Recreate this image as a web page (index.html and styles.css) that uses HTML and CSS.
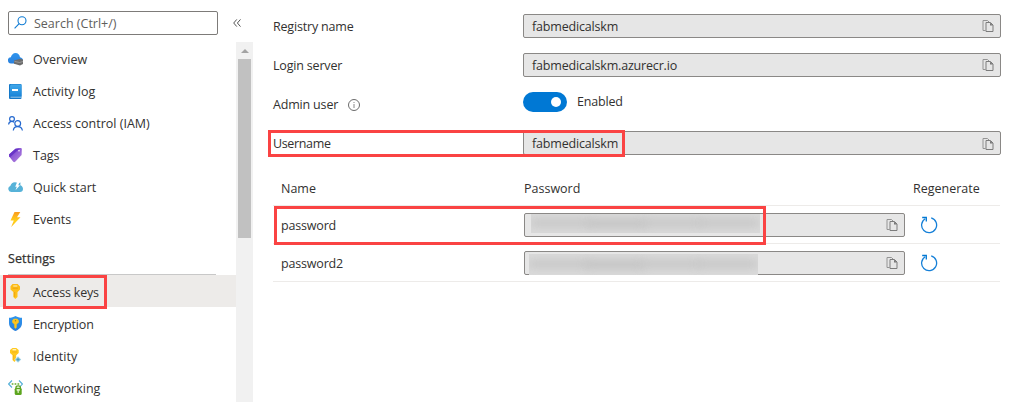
FILE: index.html
```html
<!DOCTYPE html>
<html lang="en">
<head>
<meta charset="utf-8">
<title>Access keys</title>
<link rel="stylesheet" href="styles.css">
</head>
<body>
<svg class="defs" width="0" height="0" aria-hidden="true">
  <defs>
    <linearGradient id="blue" x1="0" y1="0" x2="0" y2="1"><stop offset="0" stop-color="#2f95ee"/><stop offset="1" stop-color="#2a80dc"/></linearGradient>
    <linearGradient id="book" x1="0" y1="0" x2="0" y2="1"><stop offset="0" stop-color="#42a8ea"/><stop offset="1" stop-color="#1784d8"/></linearGradient>
    <linearGradient id="violet" x1="0" y1="0" x2="1" y2="1"><stop offset="0" stop-color="#6f35cf"/><stop offset="1" stop-color="#b78ade"/></linearGradient>
    <linearGradient id="bolt" x1="0" y1="0" x2="0" y2="1"><stop offset="0" stop-color="#fa9b1e"/><stop offset=".6" stop-color="#ffd21c"/><stop offset="1" stop-color="#fcb514"/></linearGradient>
    <linearGradient id="gold" x1="0" y1="0" x2="0" y2="1"><stop offset="0" stop-color="#fdb913"/><stop offset="1" stop-color="#ffc71c"/></linearGradient>
    <symbol id="copy" viewBox="0 0 12 13">
      <path d="M3.500 10.500H1V.5H5.500L7.500 2.500" fill="none" stroke="#949494"/>
      <path d="M4 2.500H8.500L11 5V11.500H4Z" fill="#e6e6e6" stroke="#7c7c7c"/><path d="M8 2.500V5.500H11Z" fill="#777"/>
    </symbol>
    <symbol id="refresh" viewBox="0 0 18 18">
      <path d="M11.200 1.900A7.500 7.500 0 1 1 5.200 2.700" fill="none" stroke="#1680d8" stroke-width="1.300"/>
      <path d="M2.200 1.500H6.300V5.600" fill="none" stroke="#0078d4" stroke-width="1.300"/>
    </symbol>
  </defs>
</svg>
<div class="page">
  <aside class="sidebar">
    <div class="search-row">
      <div class="search">
        <svg width="13" height="13" viewBox="0 0 13 13" fill="none" stroke="#0f7bd3" stroke-width="1.100"><circle cx="8" cy="4.800" r="4"/><path d="M5.100 7.700L.6 12.300"/></svg>
        <span>Search (Ctrl+/)</span>
      </div>
      <svg class="collapse" width="8" height="8" viewBox="0 0 8 8" fill="none" stroke="#555"><path d="M3.800.4L.7 4L3.800 7.600M7.500.4L4.400 4L7.500 7.600"/></svg>
    </div>
    <div class="nav-area">
      <nav class="nav">
        <a class="item"><svg class="icon" viewBox="0 0 15 15"><path d="M3.200 11.500A3.100 3.100 0 0 1 2.800 5.300C3.700 2.700 5.200 1 7.500 1C10 1 11.700 2.800 12 5.300C14 5.600 15 7 15 8.500C15 10.500 13.800 11.500 12 11.500Z" fill="url(#blue)"/><path d="M6 8.500L12.500 6.800L15 7.800V12L12 13.500L6 11.800Z" fill="#6d6d6d"/><path d="M6.500 9.400L11.500 10.500L15 9.500" stroke="#aaa" stroke-width=".7" fill="none"/></svg><span>Overview</span></a>
        <a class="item"><svg class="icon" viewBox="0 0 15 15"><rect x="1" y="0" width="12.500" height="15" rx="1" fill="#1478c8"/><path d="M3 .5H13.500V12.500H2V1.500Z" fill="url(#book)"/><path d="M2.500 13.200H13.500" stroke="#d9effc" stroke-width=".7"/><path d="M4 5H10V7H4Z" fill="#fff"/></svg><span>Activity log</span></a>
        <a class="item"><svg class="icon" viewBox="0 0 15 15" fill="none" stroke="#2569cf" stroke-width="1.200"><circle cx="4" cy="3" r="2.400"/><path d="M.6 8.500C.8 6.500 2 5.400 3.800 5.400C4.800 5.400 5.500 5.700 6.200 6.400"/><circle cx="9.700" cy="7.500" r="2.900"/><path d="M5.300 14.500C5.500 12 7 10.600 9.600 10.600C12.500 10.600 14 12 14.400 14.500"/></svg><span>Access control (IAM)</span></a>
        <a class="item"><svg class="icon" viewBox="0 0 15 15"><path d="M1 6.500L7.500.7L12.600.1C13.300.1 13.800.5 13.800 1.200L13.600 7L7.200 13.800C6.500 14.300 5.900 14.300 5.300 13.700L1 8.300Z" fill="url(#violet)"/><path d="M1 6.500L7.500.7L12 .2L2 9.300Z" fill="#6834c7"/><circle cx="11" cy="2.700" r=".8" fill="#fff"/></svg><span>Tags</span></a>
        <a class="item"><svg class="icon" viewBox="0 0 15 15"><path d="M3.200 12A3.100 3.100 0 0 1 2.300 6C3 4 4.600 2.300 6.900 2.300C8 2.300 9 2.600 9.700 3.300L12.500 2.500L12.300 5.300C14 6 15 7.200 15 9C15 11 13.800 12 12 12Z" fill="#56b2d8"/><path d="M9.200 2H11.700L10.200 5.300H12L7.500 10.300L8.800 6.700H7.200Z" fill="#fff"/></svg><span>Quick start</span></a>
        <a class="item"><svg class="icon" viewBox="0 0 15 15"><path d="M6.500 0H12.300L9 5.300H12.500L3.200 15L5.800 8.500H2.500Z" fill="url(#bolt)"/></svg><span>Events</span></a>
        <div class="section"><h2>Settings</h2></div>
        <a class="item low selected"><svg class="icon" viewBox="0 0 15 15"><path d="M4.500 0H9.700L12 2.500V5.500L9.500 8V13L7.300 15L5.300 13V8L2.500 5.500V2.200Z" fill="url(#gold)"/><path d="M5.300 2H9.300" stroke="#fff2bd"/><path d="M6.700 8V13M4.500 4.200H10" stroke="#e99b12" stroke-width=".8"/></svg><span class="tight">Access keys</span></a>
        <a class="item low"><svg class="icon" viewBox="0 0 15 15"><path d="M7.500 0C9.500 1.400 11.500 1.700 14 1.700V7C14 11 11 13.500 7.500 15C4 13.500 1 11 1 7V1.700C3.500 1.700 5.500 1.400 7.500 0Z" fill="url(#blue)"/><path d="M5.800 2.800H9.200L10.800 4.500V6.500L8.700 8.200V11.500L7.500 12.700L6.300 11.500V8.200L4.200 6.500V4.500Z" fill="#ffc51d"/><circle cx="7.500" cy="4.700" r=".7" fill="#9a8430"/></svg><span class="tight">Encryption</span></a>
        <a class="item low"><svg class="icon" viewBox="0 0 15 15"><path d="M4.500 0H8.300L10.700 2V5L8.200 7.300V12L6.500 14L4.500 12V7.300L2 5V2Z" fill="#ffc91f"/><path d="M4.500 1.800H8.200" stroke="#fff"/><path d="M4 4H9M5.700 7V12" stroke="#edaa18" stroke-width=".7"/><path d="M10 8.300L13.200 11.500L10 14.700L6.800 11.500Z" fill="#8cc8df" stroke="#fff" stroke-width=".5"/><path d="M8.500 11.600H11.500M10 10V13" stroke="#4497bd" stroke-width=".8"/></svg><span>Identity</span></a>
        <a class="item low"><svg class="icon" viewBox="0 0 15 15"><path d="M4 .5L.6 4L4 7.500M11 .5L14.400 4L11.700 7" fill="none" stroke="#55b0d8" stroke-width="1.100"/><path d="M3.700 4H12" stroke="#65ad2c" stroke-width="1.700" stroke-dasharray="1.700 1.200"/><path d="M8 8.500V7.400C8 5.400 12.400 5.400 12.400 7.400V8.500" fill="none" stroke="#5ca51f" stroke-width="1.300"/><rect x="6.700" y="7.700" width="7" height="7.300" rx="1.600" fill="#5ca51f"/><path d="M8.600 9H11.800V10.500L10.800 11.500V13H9.600V11.500L8.600 10.500Z" fill="#d7edbb"/></svg><span>Networking</span></a>
      </nav>
      <div class="scrollbar"><i class="arrow"></i><i class="thumb"></i></div>
    </div>
    <div class="mark mark-key"></div>
  </aside>
  <main class="main">
    <div class="field"><label class="tight">Registry name</label><div class="box"><span class="tight">fabmedicalskm</span><svg class="copy"><use href="#copy"/></svg></div></div>
    <div class="field"><label class="tight">Login server</label><div class="box"><span class="tight">fabmedicalskm.azurecr.io</span><svg class="copy"><use href="#copy"/></svg></div></div>
    <div class="field"><label class="tight">Admin user</label><svg class="info" width="12" height="12" viewBox="0 0 12 12" fill="none" stroke="#6b6b6b"><circle cx="6" cy="6" r="5.500"/><path d="M6 5V9M6 3V4" stroke="#888"/></svg><div class="toggle-wrap"><div class="toggle"><i></i></div><span class="tight">Enabled</span></div></div>
    <div class="field"><label class="tighter">Username</label><div class="box"><span class="tight">fabmedicalskm</span><svg class="copy lower"><use href="#copy"/></svg></div></div>
    <div class="table">
      <div class="tr head"><span>Name</span><span>Password</span><span class="regenerate">Regenerate</span></div>
      <div class="tr"><span class="name tight">password</span><div class="box"><div class="redacted first"><i></i><i></i><i></i><i></i></div><svg class="copy lower"><use href="#copy"/></svg></div><svg class="refresh"><use href="#refresh"/></svg></div>
      <div class="tr"><span class="name tight">password2</span><div class="box"><div class="redacted second"><i></i><i></i><i></i><i></i></div><svg class="copy lower"><use href="#copy"/></svg></div><svg class="refresh"><use href="#refresh"/></svg></div>
    </div>
    <div class="mark mark-user"></div>
    <div class="mark mark-password"></div>
  </main>
</div>
</body>
</html>
```
FILE: styles.css
```css
* { box-sizing: border-box; }
body { margin: 0; background: #fff; color: #323130; font: 12.5px/18px "Open Sans", "Noto Sans", sans-serif; overflow: hidden; }
.defs { position: absolute; }
.page { display: flex; position: relative; width: 1017px; height: 402px; overflow: hidden; }
svg { display: block; flex: none; }
span, label, h2 { white-space: nowrap; }
.tight { letter-spacing: -0.18px; }
.tighter { letter-spacing: -0.35px; }
.sidebar { width: 253px; flex: none; display: flex; flex-direction: column; }
.search-row { height: 42px; flex: none; display: flex; align-items: center; padding: 3px 0 0 8px; }
.search { width: 210px; height: 24px; border: 1px solid #7d7b79; border-radius: 2px; display: flex; align-items: center; padding-left: 5px; gap: 7px; color: #605e5c; }
.search span { padding-top: 2px; }
.collapse { margin-left: 15px; }
.nav-area { display: flex; flex: 1; min-height: 0; }
.nav { width: 236px; padding-top: 1px; overflow: hidden; }
.item { display: flex; align-items: flex-start; height: 32px; padding: 9px 0 0 8px; gap: 10px; }
.item span { line-height: 16px; }
.icon { width: 15px; height: 15px; }
.low span { padding-top: 1px; }
.selected { background: #edebe9; }
.section { height: 40px; padding: 15px 20px 0 8px; }
.section h2 { font-size: 12.5px; line-height: 18px; font-weight: 500; height: 25px; margin: 0; border-bottom: 1px solid #c8c8c8; -webkit-text-stroke: 0.25px #323130; letter-spacing: 0.1px; }
.scrollbar { width: 17px; background: #f1f1f1; display: flex; flex-direction: column; align-items: center; padding-top: 7px; }
.arrow { border: 4px solid transparent; border-top: 0; border-bottom: 4px solid #a3a3a3; }
.thumb { width: 13px; height: 179px; margin-top: 6px; background: #c1c1c1; }
.main { width: 764px; padding: 14px 16px 0 20px; }
.field { height: 24px; margin-bottom: 15px; display: flex; align-items: center; }
.field label, .box span { padding-top: 2px; }
.field .box, .toggle-wrap { margin-left: auto; width: 478px; }
.box { height: 24px; border: 1px solid #8a8886; border-radius: 2px; background: #e6e6e6; display: flex; align-items: center; padding: 0 6px 0 8px; }
.copy { width: 12px; height: 13px; margin-left: auto; }
.lower { margin-top: 2px; }
.info { margin-left: 10px; margin-top: 1px; }
.toggle-wrap { display: flex; align-items: center; gap: 10px; padding-bottom: 5px; }
.toggle { width: 44px; height: 20px; border-radius: 10px; background: #0078d4; display: flex; justify-content: flex-end; align-items: center; padding-right: 6px; }
.toggle i { width: 10px; height: 10px; border-radius: 50%; background: #fff; }
.table { margin-top: 15px; width: 727px; }
.tr { display: grid; grid-template-columns: 243px 381px 1fr; height: 38px; align-items: center; border-bottom: 1px solid #edebe9; padding-left: 8px; }
.head { height: 36px; padding-top: 3px; font-weight: 500; }
.regenerate { padding-left: 8px; }
.name { padding-top: 2px; }
.refresh { width: 18px; height: 18px; margin-left: 15px; }
.tr .box { position: relative; }
.redacted { position: absolute; overflow: hidden; background: #dadada; width: 229px; display: flex; align-items: center; }
.first { left: 6px; top: 0; height: 19px; }
.second { left: 4px; top: 2px; height: 21px; }
.redacted i { width: 60px; height: 8px; margin-right: -4px; background: #c6c6c6; filter: blur(4px); flex: none; }
.redacted i:nth-child(2) { background: #c3c3c3; height: 9px; }
.mark { position: absolute; border: 3px solid #fa4343; }
.mark-key { left: 3px; top: 275px; width: 104px; height: 34px; }
.mark-user { left: 268px; top: 130px; width: 357px; height: 27px; }
.mark-password { left: 274px; top: 206px; width: 492px; height: 39px; }
```
